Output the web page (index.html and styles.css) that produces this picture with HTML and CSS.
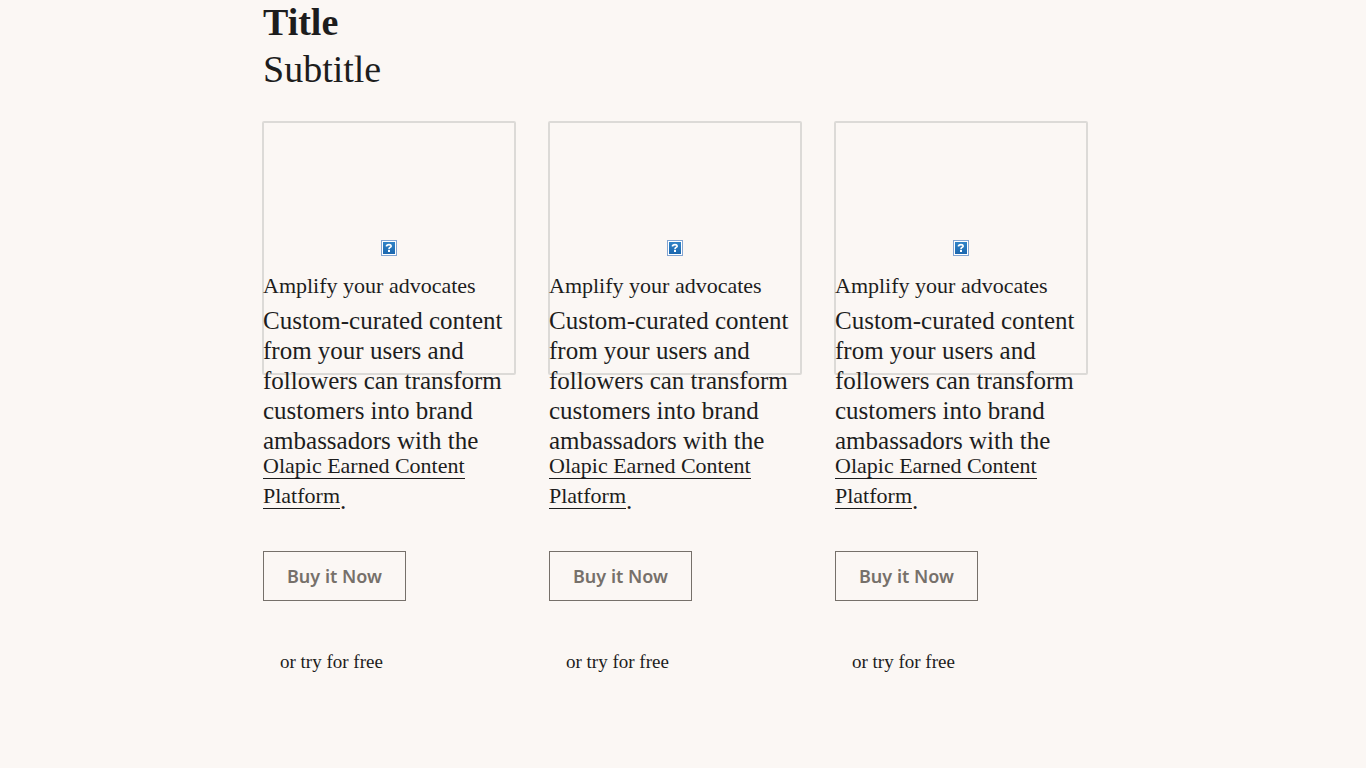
FILE: index.html
```html
<!DOCTYPE html>
<html lang="en">
<head>
<meta charset="utf-8">
<meta name="viewport" content="width=device-width, initial-scale=1">
<title>Title</title>
<link rel="stylesheet" href="styles.css">
</head>
<body>
<svg class="sprite" aria-hidden="true">
  <symbol id="missing" viewBox="0 0 16 16">
    <linearGradient id="blue" x1="0" y1="0" x2="0" y2="1"><stop offset="0" stop-color="#2f83c7"/><stop offset="1" stop-color="#1c67ae"/></linearGradient>
    <path fill="#83a5d2" d="M0 0h16v16H0z"/>
    <path fill="#fff" d="M1 1h14v14H1z"/>
    <path fill="url(#blue)" d="M2 2h12v12H2z"/>
    <path fill="none" stroke="#fff" stroke-width="1.7" d="M5.6 6.4V5.6Q6 4.6 8 4.6T10.2 6Q10.2 7 8.9 7.6Q8 8 8 9.2"/>
    <path fill="#fff" d="M7 10h2v2H7z"/>
  </symbol>
</svg>
<main class="page">
  <header class="heading">
    <h1 class="title">Title</h1>
    <p class="subtitle">Subtitle</p>
  </header>
  <div class="columns">
    <article class="card">
      <div class="picture"><svg class="missing" role="img" aria-label="Missing image"><use href="#missing"/></svg></div>
      <h2 class="name">Amplify your advocates</h2>
      <p class="copy">Custom-curated content from your users and followers can transform customers into brand ambassadors with the <a class="link" href="#">Olapic Earned Content Platform</a>.</p>
      <button class="buy" type="button">Buy it Now</button>
      <p class="trial">or try for free</p>
    </article>
    <article class="card">
      <div class="picture"><svg class="missing" role="img" aria-label="Missing image"><use href="#missing"/></svg></div>
      <h2 class="name">Amplify your advocates</h2>
      <p class="copy">Custom-curated content from your users and followers can transform customers into brand ambassadors with the <a class="link" href="#">Olapic Earned Content Platform</a>.</p>
      <button class="buy" type="button">Buy it Now</button>
      <p class="trial">or try for free</p>
    </article>
    <article class="card">
      <div class="picture"><svg class="missing" role="img" aria-label="Missing image"><use href="#missing"/></svg></div>
      <h2 class="name">Amplify your advocates</h2>
      <p class="copy">Custom-curated content from your users and followers can transform customers into brand ambassadors with the <a class="link" href="#">Olapic Earned Content Platform</a>.</p>
      <button class="buy" type="button">Buy it Now</button>
      <p class="trial">or try for free</p>
    </article>
  </div>
</main>
</body>
</html>
```
FILE: styles.css
```css
* {
  box-sizing: border-box;
}

body {
  margin: 0;
  padding: 0 16px 0 0;
  background: #fbf7f4;
  color: #1d1d1d;
  font-family: "Liberation Serif", serif;
}

h1, h2, p {
  margin: 0;
  font-weight: 400;
}

.sprite {
  display: block;
  width: 0;
  height: 0;
}

.page {
  max-width: 826px;
  margin: 0 auto;
}

.heading {
  padding-left: 1px;
  font-size: 38px;
}

.title {
  font-size: 38px;
  font-weight: 700;
  line-height: 44px;
}

.subtitle {
  line-height: 50px;
}

.columns {
  display: grid;
  grid-template-columns: repeat(3, 1fr);
  gap: 32px;
  margin-top: 27px;
}

/* The frame runs on behind the copy that follows it. */
.picture {
  display: flex;
  align-items: center;
  justify-content: center;
  aspect-ratio: 1;
  margin-bottom: -104px;
  border: 2px solid #dcdad7;
  border-radius: 2px;
}

.missing {
  width: 16px;
  height: 16px;
}

.name,
.copy {
  position: relative;
  padding-left: 1px;
  line-height: 30px;
}

.name {
  font-size: 22px;
}

.copy {
  margin-top: 5px;
  font-size: 25px;
}

.link {
  border-bottom: 1px solid #1d1d1d;
  color: inherit;
  font-size: 22px;
  line-height: 16px;
  text-decoration: none;
  vertical-align: 6px;
}

.buy {
  display: block;
  height: 50px;
  margin: 35px 0 0 1px;
  padding: 0 23px;
  border: 1px solid #76706a;
  background: transparent;
  color: #76706a;
  font-family: "Noto Sans", sans-serif;
  font-size: 18px;
  font-weight: 600;
}

.trial {
  margin-top: 46px;
  padding-left: 18px;
  font-size: 19px;
  line-height: 30px;
}
```
